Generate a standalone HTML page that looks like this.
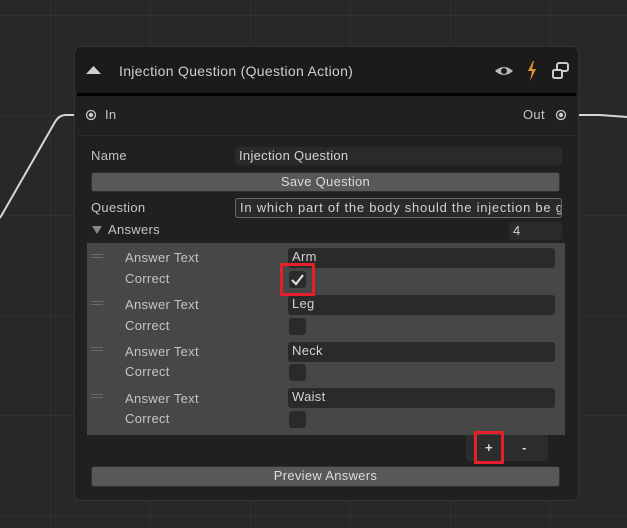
<!DOCTYPE html>
<html><head><style>
*{margin:0;padding:0;box-sizing:border-box}
body{width:627px;height:528px;background:#282828;position:relative;overflow:hidden;font-family:"Liberation Sans",sans-serif;font-size:13px;letter-spacing:0.3px;color:#c4c4c4}
.grid{position:absolute;inset:0;background-image:linear-gradient(#303030 1px,transparent 1px),linear-gradient(90deg,#303030 1px,transparent 1px);background-size:100px 100px;background-position:50px 15px}
.a{position:absolute}
.node{left:74px;top:46px;width:505px;height:455px;background:#202020;border:1px solid #333;border-radius:7px}
.fld{position:absolute;background:#2a2a2a;border-radius:3px;padding-left:4px;line-height:18px;color:#d2d2d2;white-space:nowrap;overflow:hidden}
.btn{position:absolute;background:#585858;border:1px solid #303030;border-radius:3px;text-align:center;color:#dcdcdc;line-height:18px}
.cb{position:absolute;width:17px;height:17px;background:#2a2a2a;border-radius:3px}
.lbl{position:absolute;line-height:16px}
.h{position:absolute;left:91px;width:12px;height:4px;border-top:1px solid #6a6a6a;border-bottom:1px solid #6a6a6a}
</style></head><body>
<div class="grid"></div>
<svg class="a" style="left:0;top:0" width="627" height="528"><path d="M0 218 L55 122 Q59 115 66 115 L78 115" stroke="#d6d6d6" stroke-width="2" fill="none"/><path d="M575 115 L600 115 L627 117" stroke="#d6d6d6" stroke-width="2" fill="none"/></svg>
<div class="a node">
 <div class="a" style="left:0;top:0;width:503px;height:46px;background:#1b1b1b;border-radius:7px 7px 0 0"></div>
 <div class="a" style="left:2px;top:46px;width:499px;height:3px;background:#000"></div>
 <div class="a" style="left:2px;top:88px;width:499px;height:1px;background:#2b2b2b"></div>
</div>
<svg class="a" style="left:85px;top:64px" width="18" height="12"><path d="M1 10 L8.5 2 L16 10Z" fill="#d0d0d0"/></svg>
<div class="lbl" style="left:119px;top:63px;font-size:14px;color:#cfcfcf">Injection Question (Question Action)</div>
<svg class="a" style="left:494px;top:62px" width="20" height="18"><path d="M1 9 Q10 1 19 9 Q10 17 1 9Z" fill="#bbb"/><circle cx="10" cy="9" r="3" fill="#1b1b1b"/></svg>
<svg class="a" style="left:525px;top:60px" width="14" height="22"><path d="M8 1 L3 11 L7 11 L5 21 L11 9 L7 9 L9 1Z" fill="#e0952a"/></svg>
<svg class="a" style="left:551px;top:61px" width="20" height="20"><rect x="6" y="2" width="11" height="8" rx="2" fill="none" stroke="#ccc" stroke-width="2"/><rect x="2" y="9" width="9" height="8" rx="1.5" fill="#1b1b1b" stroke="#ccc" stroke-width="2"/></svg>
<svg class="a" style="left:85px;top:109px" width="12" height="12"><circle cx="6" cy="6" r="4.5" fill="none" stroke="#ccc" stroke-width="1.3"/><circle cx="6" cy="6" r="2.2" fill="#ccc"/></svg>
<div class="lbl" style="left:105px;top:107px">In</div>
<div class="lbl" style="left:523px;top:107px">Out</div>
<svg class="a" style="left:555px;top:109px" width="12" height="12"><circle cx="6" cy="6" r="4.5" fill="none" stroke="#ccc" stroke-width="1.3"/><circle cx="6" cy="6" r="2.2" fill="#ccc"/></svg>
<div class="lbl" style="left:91px;top:148px">Name</div>
<div class="fld" style="left:235px;top:147px;width:327px;height:18px">Injection Question</div>
<div class="btn" style="left:91px;top:172px;width:469px;height:20px">Save Question</div>
<div class="lbl" style="left:91px;top:200px">Question</div>
<div class="fld" style="left:235px;top:198px;width:327px;height:20px;border:1px solid #6a6a6a;line-height:17px;letter-spacing:0.75px">In which part of the body should the injection be given?</div>
<svg class="a" style="left:91px;top:225px" width="12" height="10"><path d="M1 1 L11 1 L6 9Z" fill="#888"/></svg>
<div class="lbl" style="left:108px;top:222px">Answers</div>
<div class="fld" style="left:509px;top:222px;width:53px;height:18px">4</div>
<div class="a" style="left:87px;top:243px;width:478px;height:192px;background:#474747"></div>
<div class="h" style="top:254px"></div><div class="lbl" style="left:125px;top:250px">Answer Text</div><div class="fld" style="left:288px;top:248px;width:267px;height:20px">Arm</div><div class="lbl" style="left:125px;top:271px">Correct</div><div class="cb" style="left:289px;top:271px"></div>
<svg class="a" style="left:290px;top:273px" width="15" height="13"><path d="M2 7 L6 11 L13 2" stroke="#ddd" stroke-width="2.2" fill="none"/></svg>
<div class="h" style="top:301px"></div><div class="lbl" style="left:125px;top:297px">Answer Text</div><div class="fld" style="left:288px;top:295px;width:267px;height:20px">Leg</div><div class="lbl" style="left:125px;top:318px">Correct</div><div class="cb" style="left:289px;top:318px"></div>
<div class="h" style="top:347px"></div><div class="lbl" style="left:125px;top:344px">Answer Text</div><div class="fld" style="left:288px;top:342px;width:267px;height:20px">Neck</div><div class="lbl" style="left:125px;top:364px">Correct</div><div class="cb" style="left:289px;top:364px"></div>
<div class="h" style="top:394px"></div><div class="lbl" style="left:125px;top:391px">Answer Text</div><div class="fld" style="left:288px;top:388px;width:267px;height:20px">Waist</div><div class="lbl" style="left:125px;top:411px">Correct</div><div class="cb" style="left:289px;top:411px"></div>
<div class="a" style="left:466px;top:435px;width:82px;height:26px;background:#2c2c2c;border-radius:0 0 3px 3px"></div>
<div class="lbl" style="left:485px;top:440px;color:#ddd;font-weight:bold">+</div>
<div class="lbl" style="left:522px;top:440px;color:#ddd;font-weight:bold">-</div>
<div class="a" style="left:474px;top:431px;width:30px;height:33px;border:3px solid #e5202a"></div>
<div class="a" style="left:280px;top:263px;width:35px;height:33px;border:3px solid #e5202a"></div>
<div class="btn" style="left:91px;top:466px;width:469px;height:21px">Preview Answers</div>
</body></html>
